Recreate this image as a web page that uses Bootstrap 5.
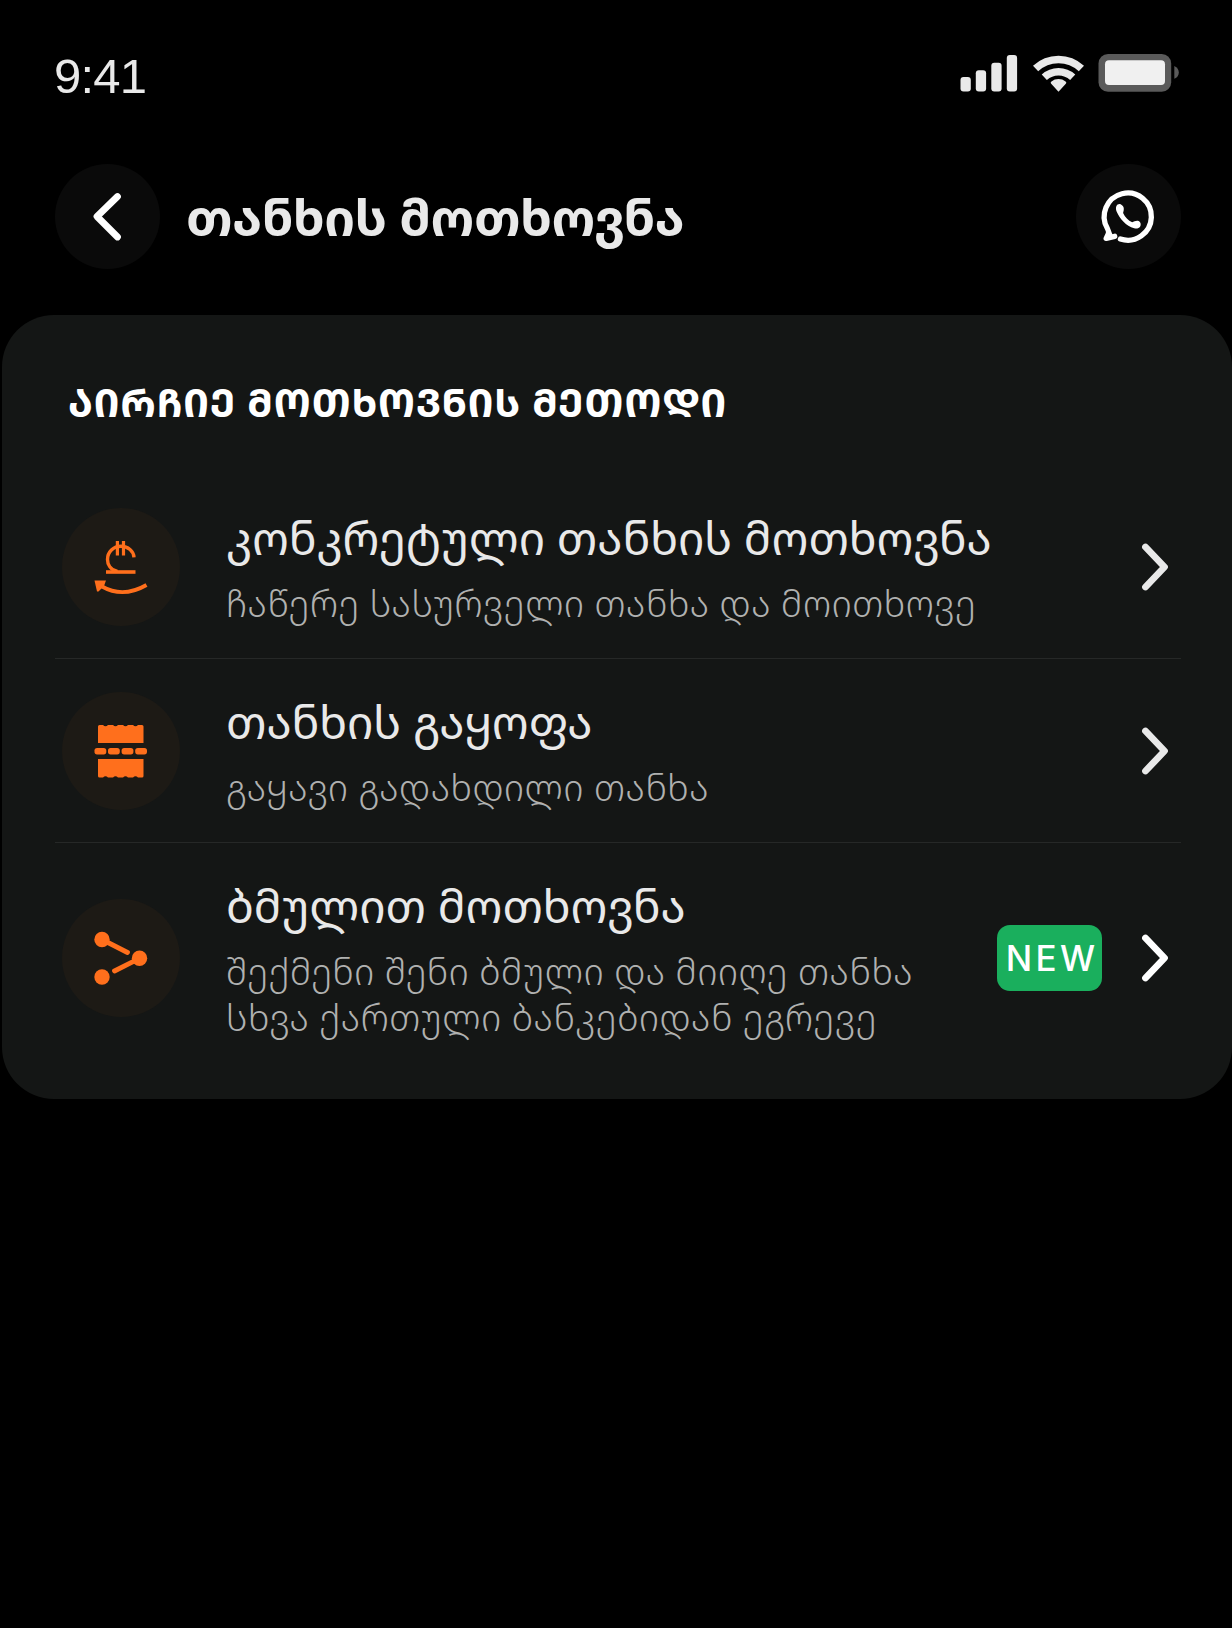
<!DOCTYPE html>
<html lang="ka">
<head>
<meta charset="utf-8">
<meta name="viewport" content="width=device-width, initial-scale=1">
<title>თანხის მოთხოვნა</title>
<link rel="stylesheet" href="https://cdn.jsdelivr.net/npm/bootstrap@5.3.0/dist/css/bootstrap.min.css">
<script defer src="https://cdn.jsdelivr.net/npm/bootstrap@5.3.0/dist/js/bootstrap.bundle.min.js"></script>
<style>
body{background:#000;color:#e9e9e9;font-family:"Noto Sans Georgian",sans-serif;min-height:1628px;overflow:hidden}
.statusbar{height:163px;padding:47px 52px 0 54px}
.clock{font:49px/56px "Liberation Sans",Arial,sans-serif;letter-spacing:-.8px;padding-top:1px}
.topbar{height:152px;padding:1px 51px 0 55px}
.round-btn{width:105px;height:105px;background:#0a0a0a;border:0;flex:none}
.page-title{font-size:51px;line-height:64px;font-weight:700;letter-spacing:-.4px;margin:21px 0 0 26px;white-space:nowrap}
.panel{margin-left:2px;height:784px;background:#141615;border-radius:52px;padding:0 51px 0 53px}
.panel-title{font-size:40px;line-height:50px;font-weight:700;letter-spacing:.6px;color:#fff;padding:62px 0 0 13px;height:160px;margin:0;white-space:nowrap}
.method{height:184px;padding:0 13px 0 7px;border-bottom:1px solid #262827;color:#e9e9e9;text-decoration:none}
.method:last-child{height:229px;border:0}
.method-icon{width:118px;height:118px;background:#1d1a15;flex:none}
.method-text{margin-left:46px;white-space:nowrap}
.method-name{font-size:46px;line-height:60px;letter-spacing:-.1px;color:#e9e9e9}
.method-note{font-size:36px;line-height:46px;font-weight:300;letter-spacing:.6px;color:#b0b1b0;margin-top:14px}
.new-tag{width:105px;height:66px;border-radius:13px;background:#1aaf5d;color:#fff;font:500 35px/67px Inter,sans-serif;letter-spacing:3.300px;padding-left:5px;margin-right:39px}
svg{display:block;flex:none}
</style>
</head>
<body>
<header>
<div class="statusbar d-flex justify-content-between align-items-start">
<span class="clock">9:41</span>
<svg width="220" height="40" viewBox="960 53 220 40" style="margin-top:6px">
<g fill="#e9e9e9"><rect x="960.5" y="77" width="10.3" height="14.5" rx="3"/><rect x="975.8" y="70.3" width="10.3" height="21.2" rx="3"/><rect x="991.3" y="62.7" width="10.3" height="28.8" rx="3"/><rect x="1006.8" y="55" width="10.3" height="36.5" rx="3"/>
<path d="M1058.5 91.800l-7.300-8a1.600 1.600 0 0 1 .2-2.400a12 12 0 0 1 14.200 0a1.600 1.600 0 0 1 .2 2.400z"/></g>
<g fill="none" stroke="#e9e9e9" stroke-width="7.6"><path d="M1035.600 68.600a33.500 33.500 0 0 1 45.800 0"/><path d="M1044.300 77.300a21 21 0 0 1 28.400 0"/></g>
<rect x="1098.5" y="54" width="72.7" height="37.8" rx="9.5" fill="#5a5a5a"/><rect x="1105" y="60.3" width="60" height="24.6" rx="4" fill="#f0f0f0"/><path d="M1174.300 66c6 2.400 6 10.400 0 12.800z" fill="#5a5a5a"/>
</svg>
</div>
<div class="topbar d-flex align-items-start">
<button class="round-btn rounded-circle p-0" aria-label="უკან"><svg width="105" height="105"><path d="M62.500 32.500L42 52.500L62.500 73" fill="none" stroke="#fff" stroke-width="6.800" stroke-linecap="round" stroke-linejoin="round"/></svg></button>
<h1 class="page-title">თანხის მოთხოვნა</h1>
<button class="round-btn rounded-circle p-0 ms-auto" aria-label="WhatsApp"><svg width="105" height="105" viewBox=".6 .3 105 105"><g fill="none" stroke="#fff" stroke-width="5.300" stroke-linecap="round" stroke-linejoin="round"><path d="M45 75.300A23.600 23.600 0 1 0 32 64.800C33.600 67.500 33.600 68 33 70L30.800 74.600L39.300 72.600"/></g><path d="M31 67.500l4.500-.5 2 4.500-5.500 4z" fill="#fff"/><path d="M45.200 40.500C41.500 39.600 39.500 43.500 41.200 47.700C44.500 55.500 50.500 61.800 58.800 64.600C63.600 66 66.500 62 64.800 58.700C62 55.500 59.200 58 56.800 58.600C52.800 57 49.600 53.600 47.700 49.400C48.300 46.800 49.800 42.600 45.200 40.500z" fill="#fff"/></svg></button>
</div>
</header>
<main class="panel">
<h2 class="panel-title">ᲐᲘᲠᲩᲘᲔ ᲛᲝᲗᲮᲝᲕᲜᲘᲡ ᲛᲔᲗᲝᲓᲘ</h2>
<a class="method d-flex align-items-center">
<span class="method-icon rounded-circle"><svg width="118" height="118" viewBox="62 508 118 118"><g fill="none" stroke="#ff6f1c"><path d="M106 572H135.500" stroke-width="3.600"/><path d="M117.500 571.500C110 570 107.500 564 107.500 559.500C107.500 552 113.500 546.300 121 546.300C128 546.300 133.700 551 134 557.300" stroke-width="3.400"/><path d="M117.400 541V555.500M123.500 541V555.500" stroke-width="3.200"/><path d="M102 586.500Q123 598.500 146.500 585" stroke-width="3.800"/></g><path d="M94.500 580.500H106L104 586L98.500 591.500H97z" fill="#ff6f1c"/></svg></span>
<span class="method-text"><span class="method-name d-block">კონკრეტული თანხის მოთხოვნა</span><span class="method-note d-block">ჩაწერე სასურველი თანხა და მოითხოვე</span></span>
<svg class="ms-auto" width="27" height="50"><path d="M4.500 5L23.500 25L4.500 45" fill="none" stroke="#e9e9e9" stroke-width="6.800" stroke-linecap="round" stroke-linejoin="round"/></svg>
</a>
<a class="method d-flex align-items-center">
<span class="method-icon rounded-circle"><svg width="118" height="118" viewBox="62 692 118 118"><g fill="#ff6f1c"><path d="M98 743V726.500a1.500 1.500 0 0 1 1.500-1.500h3.500q2.500 2.500 5 0h5q2.500 2.500 5 0h5q2.500 2.500 5 0h5q2.500 2.500 5 0h4a1.500 1.500 0 0 1 1.500 1.500V743z"/><path d="M98 759V776a1.500 1.500 0 0 0 1.500 1.500h3.500q2.500-2.500 5 0h5q2.500-2.500 5 0h5q2.500-2.500 5 0h5q2.500-2.500 5 0h4a1.500 1.500 0 0 0 1.500-1.500V759z"/><rect x="94.500" y="748" width="11.800" height="6.400" rx="2.600"/><rect x="108" y="748" width="11.800" height="6.400" rx="2.600"/><rect x="121.600" y="748" width="11.800" height="6.400" rx="2.600"/><rect x="135.200" y="748" width="11.800" height="6.400" rx="2.600"/></g></svg></span>
<span class="method-text"><span class="method-name d-block">თანხის გაყოფა</span><span class="method-note d-block">გაყავი გადახდილი თანხა</span></span>
<svg class="ms-auto" width="27" height="50"><path d="M4.500 5L23.500 25L4.500 45" fill="none" stroke="#e9e9e9" stroke-width="6.800" stroke-linecap="round" stroke-linejoin="round"/></svg>
</a>
<a class="method d-flex align-items-center">
<span class="method-icon rounded-circle"><svg width="118" height="118" viewBox="62 898.500 118 118"><g fill="#ff6f1c"><circle cx="102" cy="939" r="7.700"/><circle cx="139.500" cy="957.800" r="7.700"/><circle cx="102" cy="976.500" r="7.700"/></g><path d="M102 939L127.500 952M139.500 957.800L114.500 970.500" stroke="#ff6f1c" stroke-width="4.800" stroke-linecap="round"/></svg></span>
<span class="method-text"><span class="method-name d-block">ბმულით მოთხოვნა</span><span class="method-note d-block">შექმენი შენი ბმული და მიიღე თანხა<br>სხვა ქართული ბანკებიდან ეგრევე</span></span>
<span class="new-tag ms-auto text-center">NEW</span>
<svg width="27" height="50"><path d="M4.500 5L23.500 25L4.500 45" fill="none" stroke="#fff" stroke-width="6.800" stroke-linecap="round" stroke-linejoin="round"/></svg>
</a>
</main>
</body>
</html>
